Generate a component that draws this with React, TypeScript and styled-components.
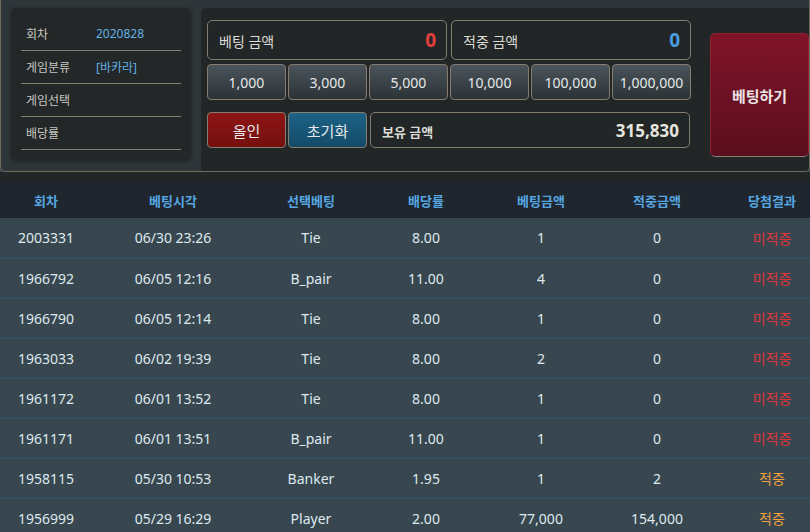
import React from "react";
import styled, { createGlobalStyle } from "styled-components";

const Global = createGlobalStyle`
  html, body { margin: 0; padding: 0; background: #37474f; overflow: hidden; }
  body { font-family: "Noto Sans", "Noto Sans CJK KR", sans-serif; }
  * { box-sizing: border-box; }
`;

const Page = styled.div`
  width: 810px;
  display: flex;
  flex-direction: column;
`;

const TopWrap = styled.div`
  display: flex;
  background: #2f3639;
  border: 1px solid #6f6b5e;
  border-top: none;
  border-radius: 0 0 5px 5px;
  height: 172px;
  padding: 8px 0 0 10px;
  overflow: hidden;
`;

const InfoPanel = styled.div`
  width: 180px;
  height: 152px;
  background: #232728;
  border-radius: 5px;
  box-shadow: 0 1px 4px rgba(0, 0, 0, 0.45);
  padding: 10px 10px 0 10px;
  display: flex;
  flex-direction: column;
`;

const InfoRow = styled.div`
  height: 33px;
  display: flex;
  align-items: center;
  padding: 0 0 0 5px;
  border-bottom: 1px solid #857e70;
  font-size: 12px;
  padding-bottom: 1px;
`;

const InfoLabel = styled.span`
  width: 70px;
  color: #c7c7c2;
`;

const InfoValue = styled.span`
  color: #62b1e4;
`;

const MainPanel = styled.div`
  flex: 1;
  margin-left: 10px;
  background: #222627;
  border-radius: 5px 0 0 0;
  padding: 12px 0 0 6px;
  display: flex;
  align-items: flex-start;
`;

const Controls = styled.div`
  width: 484px;
  display: flex;
  flex-direction: column;
`;

const AmountRow = styled.div`
  display: flex;
  gap: 4px;
  height: 40px;
`;

const AmountBox = styled.div`
  flex: 1;
  border: 1px solid #857e70;
  border-radius: 5px;
  display: flex;
  align-items: center;
  justify-content: space-between;
  padding: 0 10px 0 11px;
  background: #232627;
`;

const AmountLabel = styled.span<{ $bold?: boolean }>`
  color: #dcdcd6;
  font-size: ${(p) => (p.$bold ? "13px" : "14px")};
  font-weight: ${(p) => (p.$bold ? 700 : 400)};
  padding-top: 2px;
`;

const AmountValue = styled.span<{ $color: string; $size?: number }>`
  color: ${(p) => p.$color};
  font-size: ${(p) => p.$size ?? 19}px;
  font-weight: 700;
`;

const ChipRow = styled.div`
  display: grid;
  grid-template-columns: repeat(6, 1fr);
  gap: 2px;
  margin-top: 4px;
  height: 36px;
`;

const Btn = styled.button<{ $variant?: "chip" | "red" | "blue" }>`
  border: 1px solid #857e70;
  border-radius: 4px;
  color: #e4e8ea;
  font-family: inherit;
  font-size: ${(p) => (p.$variant === "chip" ? "14px" : "15px")};
  padding: 0;
  cursor: pointer;
  background: ${(p) =>
    p.$variant === "red"
      ? "linear-gradient(#8e1414, #74100f)"
      : p.$variant === "blue"
      ? "linear-gradient(#1c6386, #154a68)"
      : "linear-gradient(#4a545a, #2c3337)"};
`;

const BottomRow = styled.div`
  display: flex;
  gap: 2px;
  margin-top: 12px;
  height: 36px;
`;

const SmallBtn = styled(Btn)`
  width: 79px;
`;

const HoldBox = styled(AmountBox)`
  margin-left: 1px;
  margin-right: 1px;
  padding-right: 10px;
`;

const BetButton = styled.button`
  margin-left: 19px;
  margin-top: 13px;
  width: 99px;
  height: 124px;
  border: 1px solid #8d2230;
  border-bottom-color: #8a7f72;
  border-radius: 5px;
  background: linear-gradient(#801429, #5b0e1e);
  color: #eae4e4;
  font-family: inherit;
  font-size: 15px;
  font-weight: 700;
  cursor: pointer;
`;

const Gap = styled.div`
  height: 10px;
  background: #232627;
`;

const Table = styled.table`
  width: 828px;
  border-collapse: collapse;
  table-layout: fixed;
`;

const Th = styled.th`
  height: 36px;
  background: #1f262d;
  color: #56a6e2;
  font-size: 13px;
  font-weight: 700;
  text-align: center;
  padding: 0;
`;

const Tr = styled.tr`
  background: #38474f;
  border-bottom: 1px solid #2d586f;
`;

const Td = styled.td<{ $color?: string }>`
  height: 40px;
  text-align: center;
  padding: 0;
  font-size: 14px;
  color: ${(p) => p.$color ?? "#dde9f0"};
`;

const chips = ["1,000", "3,000", "5,000", "10,000", "100,000", "1,000,000"];

const cols = [92, 162, 114, 116, 114, 118, 112];
const heads = ["회차", "베팅시각", "선택베팅", "배당률", "베팅금액", "적중금액", "당첨결과"];

const rows: string[][] = [
  ["2003331", "06/30 23:26", "Tie", "8.00", "1", "0", "미적중"],
  ["1966792", "06/05 12:16", "B_pair", "11.00", "4", "0", "미적중"],
  ["1966790", "06/05 12:14", "Tie", "8.00", "1", "0", "미적중"],
  ["1963033", "06/02 19:39", "Tie", "8.00", "2", "0", "미적중"],
  ["1961172", "06/01 13:52", "Tie", "8.00", "1", "0", "미적중"],
  ["1961171", "06/01 13:51", "B_pair", "11.00", "1", "0", "미적중"],
  ["1958115", "05/30 10:53", "Banker", "1.95", "1", "2", "적중"],
  ["1956999", "05/29 16:29", "Player", "2.00", "77,000", "154,000", "적중"],
];

export default function App() {
  return (
    <Page>
      <Global />
      <TopWrap>
        <InfoPanel>
          <InfoRow>
            <InfoLabel>회차</InfoLabel>
            <InfoValue>2020828</InfoValue>
          </InfoRow>
          <InfoRow>
            <InfoLabel>게임분류</InfoLabel>
            <InfoValue>[바카라]</InfoValue>
          </InfoRow>
          <InfoRow>
            <InfoLabel>게임선택</InfoLabel>
          </InfoRow>
          <InfoRow>
            <InfoLabel>배당률</InfoLabel>
          </InfoRow>
        </InfoPanel>
        <MainPanel>
          <Controls>
            <AmountRow>
              <AmountBox>
                <AmountLabel>베팅 금액</AmountLabel>
                <AmountValue $color="#e0403c">0</AmountValue>
              </AmountBox>
              <AmountBox>
                <AmountLabel>적중 금액</AmountLabel>
                <AmountValue $color="#4a9de0">0</AmountValue>
              </AmountBox>
            </AmountRow>
            <ChipRow>
              {chips.map((c) => (
                <Btn key={c} $variant="chip">
                  {c}
                </Btn>
              ))}
            </ChipRow>
            <BottomRow>
              <SmallBtn $variant="red">올인</SmallBtn>
              <SmallBtn $variant="blue">초기화</SmallBtn>
              <HoldBox>
                <AmountLabel $bold>보유 금액</AmountLabel>
                <AmountValue $color="#e6e4de" $size={17}>
                  315,830
                </AmountValue>
              </HoldBox>
            </BottomRow>
          </Controls>
          <BetButton>베팅하기</BetButton>
        </MainPanel>
      </TopWrap>
      <Gap />
      <Table>
        <colgroup>
          {cols.map((w, i) => (
            <col key={i} style={{ width: w }} />
          ))}
        </colgroup>
        <thead>
          <tr>
            {heads.map((h) => (
              <Th key={h}>{h}</Th>
            ))}
          </tr>
        </thead>
        <tbody>
          {rows.map((r) => (
            <Tr key={r[0]}>
              {r.map((c, i) => (
                <Td
                  key={i}
                  $color={
                    i === 6 ? (c === "적중" ? "#f0a040" : "#e0343c") : undefined
                  }
                >
                  {c}
                </Td>
              ))}
            </Tr>
          ))}
        </tbody>
      </Table>
    </Page>
  );
}
